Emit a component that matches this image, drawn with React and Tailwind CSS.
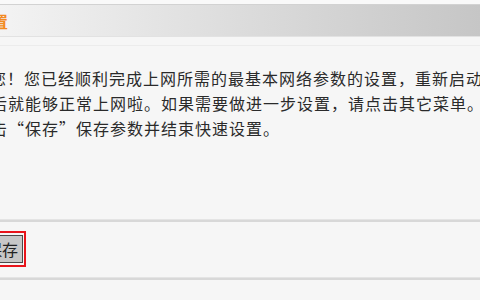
const LINES = [
  { text: '您！您已经顺利完成上网所需的最基本网络参数的设置，重新启动', offset: '-ml-[10px]' },
  { text: '后就能够正常上网啦。如果需要做进一步设置，请点击其它菜单。', offset: '-ml-[9px]' },
  { text: '击“保存”保存参数并结束快速设置。', offset: '-ml-[9px]' },
];

const App = () => {
  return (
    <div
      className="w-[480px] h-[300px] overflow-hidden bg-[#f6f6f6] text-[#2a2a2a]"
      style={{ fontFamily: '"Noto Sans CJK SC", "Noto Sans", sans-serif' }}
    >
      {/* Title bar */}
      <div className="h-[4px] bg-[#f9f9f9]" />
      <div className="h-[33px] flex items-center border-t border-[#d2d2d2] border-b border-b-[#e2e2e2] bg-gradient-to-r from-[#f3f3f3] via-[#dcdcdc] to-[#c6c6c6]">
        <span className="-ml-[56px] text-[16px] font-bold leading-none text-[#f28a22] whitespace-nowrap">
          快速设置
        </span>
      </div>
      <div className="h-[9px] border-b border-[#ececec]" />

      {/* Message */}
      <div className="pt-[20px] text-[16px] leading-[25px] tracking-[1px] whitespace-nowrap">
        {LINES.map((line, i) => (
          <div key={i} className={line.offset}>
            {line.text}
          </div>
        ))}
      </div>

      <div className="mt-[78px] h-[3px] bg-[#d8d8d8] border-t border-[#e4e4e4]" />

      {/* Save button */}
      <div className="mt-[9px] -ml-[22px] flex">
        <div className="border-2 border-[#e8141b] py-[2px] px-[1px]">
          <button className="h-[28px] px-[4px] border border-[#4a4a4a] bg-[#c7c7c7] text-[16px] leading-none text-[#222] whitespace-nowrap">
            保存
          </button>
        </div>
      </div>

      <div className="mt-[10px] h-[3px] bg-[#d8d8d8] border-t border-[#e4e4e4]" />
    </div>
  );
};

export default App;
